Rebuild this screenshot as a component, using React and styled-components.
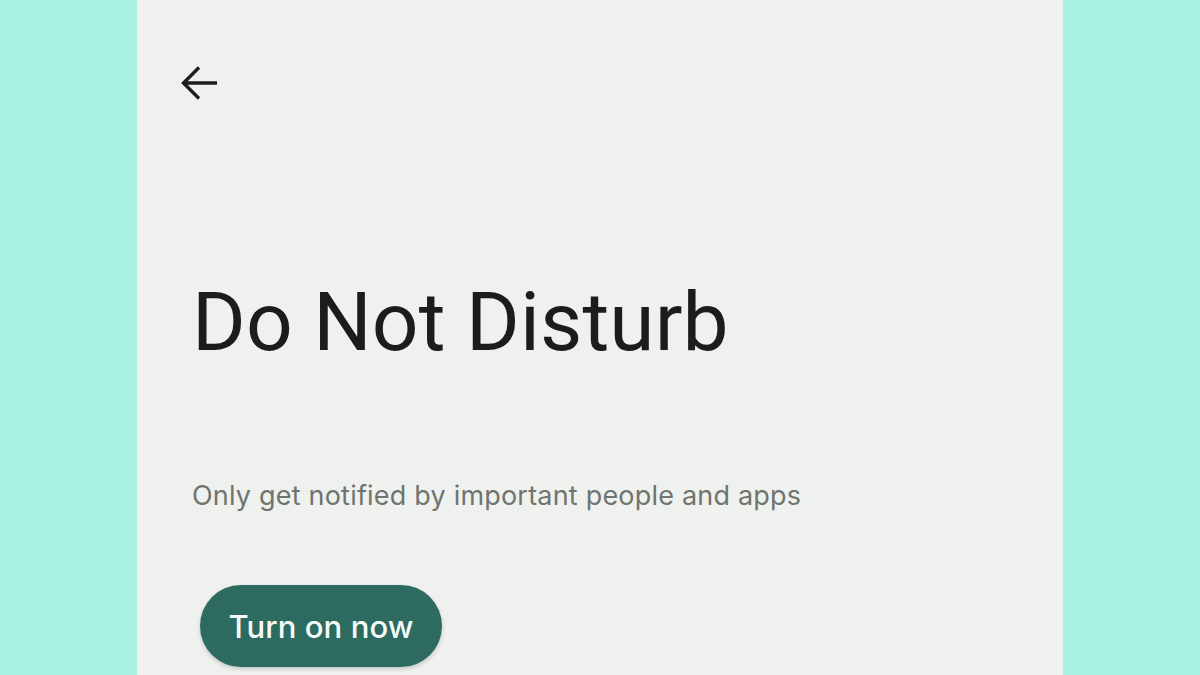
import React from "react";
import styled, { createGlobalStyle } from "styled-components";

const Global = createGlobalStyle`
  html, body { margin: 0; padding: 0; background: #a9f1e2; }
  body { font-family: Roboto, "Noto Sans", sans-serif; }
`;

const Stage = styled.div`
  display: flex;
  width: 1200px;
  height: 675px;
  overflow: hidden;
  background: #a9f1e2;
`;

const Panel = styled.div`
  margin-left: 137px;
  width: 926px;
  height: 675px;
  background: #eff1ee;
  display: flex;
  flex-direction: column;
  align-items: flex-start;
  padding: 59px 0 0 55px;
  box-sizing: border-box;
`;

const BackButton = styled.button`
  width: 48px;
  height: 48px;
  margin-left: -16px;
  padding: 0;
  border: none;
  background: transparent;
  display: flex;
  align-items: center;
  justify-content: center;
  color: #1c1e1c;
`;

const Title = styled.h1`
  margin: 175px 0 0 0;
  font-family: Roboto, sans-serif;
  font-weight: 400;
  font-size: 82px;
  line-height: 80px;
  color: #1b1d1b;
  letter-spacing: 0.1px;
`;

const Subtitle = styled.p`
  margin: 118px 0 0 0;
  font-family: Inter, Roboto, sans-serif;
  font-size: 27px;
  line-height: 32px;
  letter-spacing: 0.2px;
  color: #6f746f;
`;

const PrimaryButton = styled.button`
  margin: 73px 0 0 8px;
  height: 82px;
  width: 242px;
  padding: 0;
  border: none;
  border-radius: 41px;
  background: #2d6b61;
  color: #f4fbf8;
  font-family: Inter, Roboto, sans-serif;
  font-size: 31px;
  font-weight: 500;
  letter-spacing: 0.1px;
  box-shadow: 0 2px 4px rgba(0, 0, 0, 0.18);
`;

export default function App() {
  return (
    <>
      <Global />
      <Stage>
        <Panel>
          <BackButton aria-label="Back">
            <svg width="40" height="40" viewBox="0 0 40 40" fill="none">
              <path
                d="M37 20H3.5M19 4.5 3.5 20 19 35.5"
                stroke="currentColor"
                strokeWidth="3.4"
                strokeLinecap="butt"
                strokeLinejoin="miter"
              />
            </svg>
          </BackButton>
          <Title>Do Not Disturb</Title>
          <Subtitle>Only get notified by important people and apps</Subtitle>
          <PrimaryButton>Turn on now</PrimaryButton>
        </Panel>
      </Stage>
    </>
  );
}
